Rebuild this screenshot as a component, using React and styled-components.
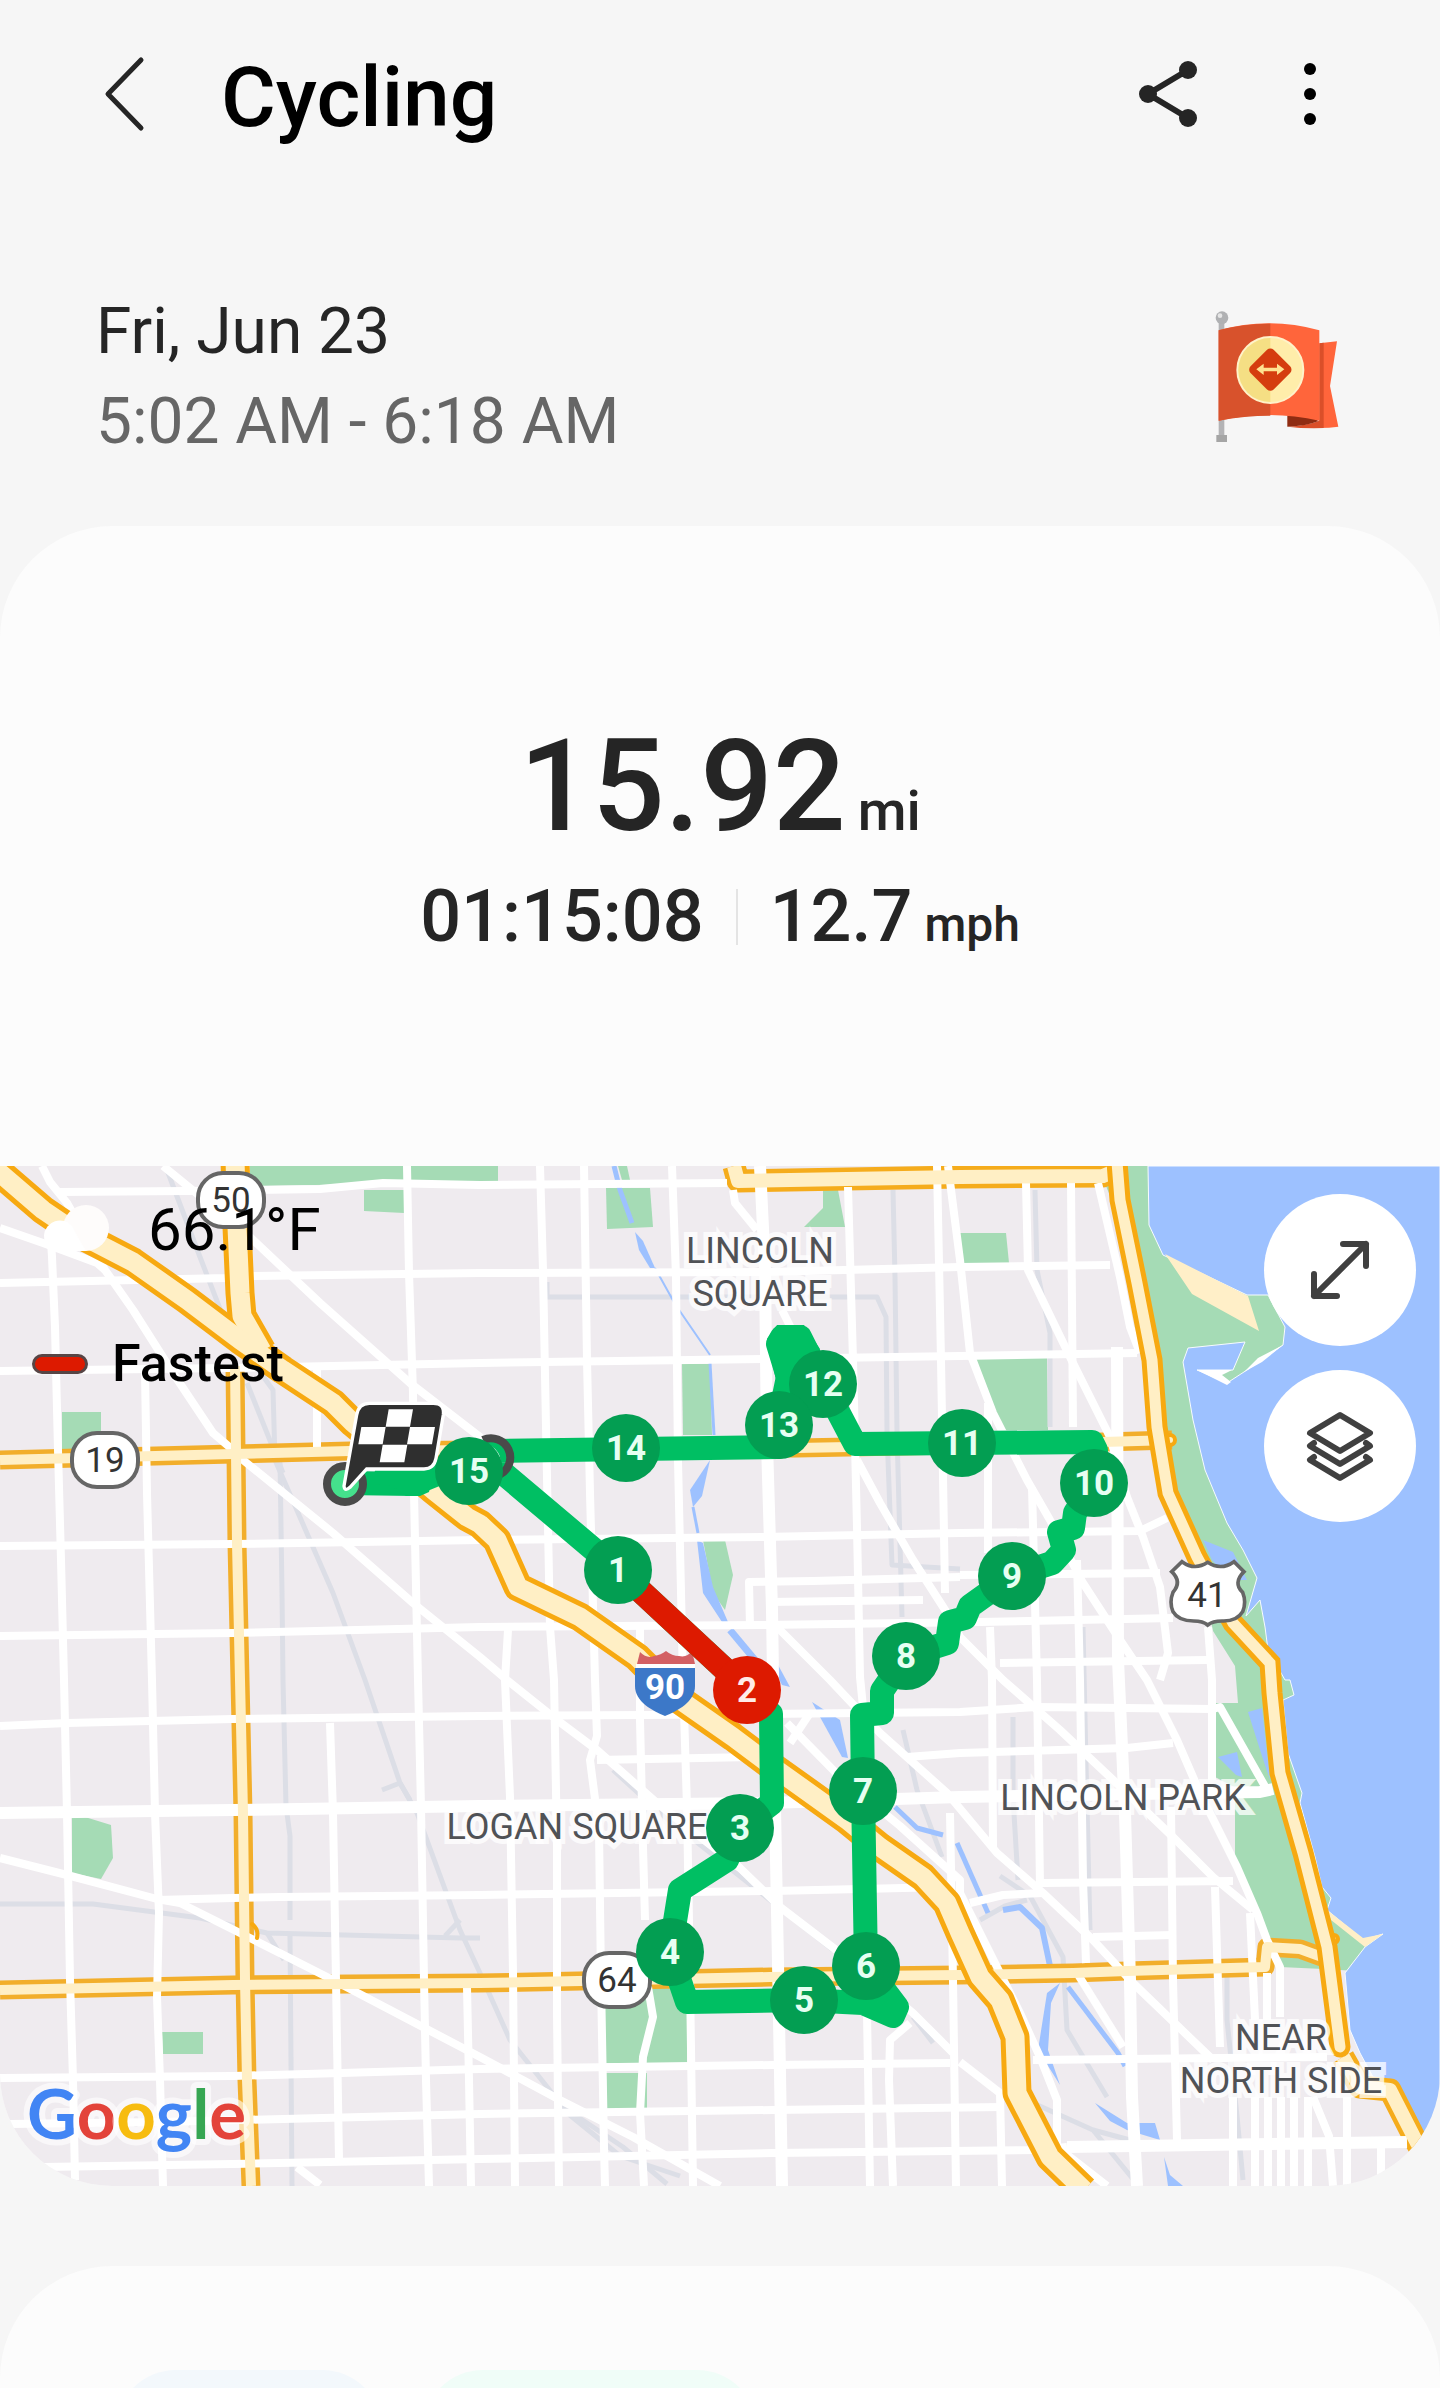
import styled, { createGlobalStyle } from "styled-components";

const GlobalStyle = createGlobalStyle`
    * {
        box-sizing: border-box;
    }

    body {
        margin: 0;
        background: #f6f6f6;
        font-family: Roboto, "Noto Sans", sans-serif;
        color: #252525;
    }

    h1, p {
        margin: 0;
    }
`;

const parks = [
    "250,0 498,0 498,16 250,20",
    "364,24 404,24 404,47 364,45",
    "62,246 101,246 101,284 62,284",
    "72,651 85,651 111,659 113,692 101,713 72,707",
    "162,866 203,866 203,888 163,888",
    "606,22 650,22 653,61 607,63",
    "618,0 627,0 630,14 622,14",
    "823,24 838,24 845,61 804,61 823,42",
    "682,198 710,198 712,269 683,269",
    "703,374 725,374 733,409 725,444 713,427",
    "960,67 1006,67 1009,97 962,97",
    "975,192 1047,192 1048,264 1000,264 987,227",
    "604,821 687,821 687,897 604,897",
    "606,907 647,907 647,943 607,943",
    "1105,18 1120,0 1300,0 1300,514 1310,640 1390,740 1390,807 1323,803 1280,801 1267,771 1255,741 1235,697 1235,631 1240,624 1215,611 1215,537 1238,537 1235,500 1213,465 1200,400 1170,330 1160,280 1145,110",
];

const lake =
    "1148,0 1149,59 1163,89 1247,129 1268,129 1285,161 1283,179 1247,204 1227,217 1197,204 1233,204 1245,176 1188,182 1183,196 1193,254 1205,304 1227,357 1243,384 1257,412 1246,450 1260,434 1265,461 1268,484 1285,514 1290,514 1294,529 1283,534 1288,587 1302,627 1300,637 1315,691 1322,721 1331,732 1327,744 1363,774 1383,768 1365,781 1345,807 1350,864 1360,887 1373,911 1393,914 1407,934 1427,981 1440,1007 1440,0";

const ponds = [
    "1203,374 1233,386 1247,414 1230,414 1212,394",
    "1248,546 1262,542 1270,614 1262,590",
    "1218,591 1237,586 1242,611 1236,609",
    "635,66 643,75 655,102 650,102 639,84",
    "710,294 690,324 693,341 702,330",
    "697,374 703,377 713,421 728,456 722,456 703,427",
    "812,536 840,554 848,592 842,591 820,551",
    "777,497 790,521 782,519 776,507",
    "1060,817 1047,827 1038,884 1060,919 1048,884 1051,837",
    "1095,937 1127,957 1155,957 1160,974 1127,964 1110,955",
    "1164,991 1170,1009 1183,1020 1168,1020",
];

const streams = [
    [5, "614,0 620,24 632,57"],
    [2, "655,102 675,138 710,189"],
    [3, "710,197 714,269"],
    [3, "693,341 698,367"],
    [7, "730,464 755,494"],
    [5, "895,641 917,662 943,669"],
    [5, "957,677 988,747"],
    [6, "1003,744 1020,741 1042,762 1050,800"],
    [5, "1068,821 1118,887 1125,900"],
];

const rails = [
    "280,294 282,427 283,514 286,640 290,670 290,754",
    "290,770 292,1020",
    "167,4 200,91 227,161 273,224 275,294 333,427 365,514 400,617 417,647 460,764 480,807 510,874 563,941 623,981 667,1018",
    "247,217 283,307",
    "382,624 400,617 410,634",
    "0,738 93,738 200,752 267,767 460,772 480,772",
    "445,770 460,754",
    "267,767 284,794",
    "500,400 545,431",
    "893,24 895,111 897,267 902,451",
    "547,116 547,131 877,131 886,151 887,267 892,399 960,403",
    "1035,24 1037,104 1050,167 1050,261",
    "1083,461 1086,597 1090,764",
    "1013,551 1013,631 1018,714",
    "1000,710 1030,730 1063,791 1067,864 1107,931",
    "980,754 1005,740 1027,734",
    "1033,937 1093,964 1137,1018",
    "1093,964 1130,974",
    "1227,811 1227,854 1237,950 1243,1014",
    "613,604 660,647 833,784",
    "903,564 917,624 942,691",
    "913,851 933,877",
    "560,941 620,990 680,1010",
];

const streets = [
    "42,0 50,16 67,37 105,104 133,144 173,207 213,267 233,284 243,294 333,367 413,437 480,491 507,514 557,554 597,584 657,637 740,702 780,741 840,787 913,847 953,887",
    "50,60 52,91 55,161 58,284 61,394 64,514 67,647 70,814 73,914 75,1014",
    "145,207 147,327 152,514 155,647 159,747 157,831 160,914 163,1020",
    "317,204 317,281",
    "330,557 333,647 336,814 339,994",
    "407,0 409,107 413,227 414,327 418,514 421,641 424,814 426,914 429,1020",
    "467,821 469,914 471,1020",
    "60,26 187,25 320,23 383,17 480,19 727,17",
    "0,117 227,112 250,110 480,107 767,106 960,101 1110,99",
    "0,205 227,202 283,201 480,197 763,193 960,190 1137,187",
    "0,380 233,378 480,374 763,371 960,367 1140,365 1167,352",
    "0,470 233,467 480,461 763,459 980,456 1173,452",
    "0,560 67,557 233,553 480,550 647,549 960,546 1037,541 1213,543",
    "157,734 233,732 280,731 480,729 773,725 947,721",
    "1043,717 1233,715",
    "970,737 1003,729 1043,727",
    "0,912 233,910 480,903 773,899 950,897",
    "1033,894 1220,892 1327,891",
    "10,958 160,956 480,948 773,944 1003,941",
    "43,1001 233,998 480,993 773,987 1037,984 1067,981",
    "163,0 250,71 320,137 410,217 480,271 500,290",
    "0,62 43,77 97,97 105,104",
    "0,692 67,709 157,733 180,737 250,772 333,814 480,891 560,934 633,971 720,1020",
    "297,1001 320,1019",
    "508,464 505,514 510,631 513,807 515,1020",
    "540,0 543,104 546,261 550,461 554,514 557,681 557,847 559,1020",
    "584,0 587,194 590,327 595,514 597,570 590,594 599,664 601,814 604,981 605,1020",
    "672,0 676,111 678,294 683,514 687,641 690,814 693,1020",
    "640,461 640,554 643,681 645,754",
    "648,821 653,851 643,891 640,947 644,1020",
    "848,21 853,194 857,361 860,511 863,541 867,847 870,1020",
    "937,0 941,194 945,427",
    "950,647 953,814 956,1020",
    "948,0 960,94 970,187 993,247 1027,314 1050,354 1083,417 1120,474 1147,514 1177,574 1200,627 1237,701 1257,747 1267,774 1280,801 1280,851",
    "782,144 794,168",
    "857,294 880,337 913,394 947,447 960,471 1003,514 1060,564 1127,627 1173,671 1213,711 1253,744",
    "733,24 735,37 757,64",
    "750,461 749,416 813,415 960,411",
    "767,436 923,434",
    "777,461 830,514 880,567 947,627 997,687 1043,727 1093,774 1133,817 1213,894",
    "787,557 840,611 900,660 960,714 960,727 997,801 1020,847 1040,891 1057,934 1057,981 1107,1020",
    "790,577 810,547",
    "597,594 753,591",
    "907,591 960,587 1127,582 1173,577",
    "910,857 890,874 889,914 893,1020",
    "1026,17 1028,104 1070,191 1110,271 1127,331 1143,371 1160,421 1168,487 1160,514",
    "1071,17 1073,261",
    "1098,17 1120,111 1130,161 1140,187",
    "988,237 988,387",
    "990,461 992,514 993,681",
    "1032,321 1037,514 1040,721",
    "1077,394 1080,514 1083,714 1086,797",
    "1208,461 1212,514 1212,614",
    "1171,641 1173,814 1177,974",
    "1215,721 1220,881",
    "1250,747 1255,854",
    "1267,807 1267,854",
    "960,409 1160,407",
    "1000,497 1207,494",
    "1093,771 1173,769",
    "1213,543 1220,541 1267,624",
    "1077,807 1123,881",
    "960,896 1000,927 1002,1020",
    "1233,931 1233,1020",
    "1255,931 1255,1020",
    "1268,931 1268,1020",
    "1281,931 1281,1020",
    "1294,931 1294,1020",
    "1308,931 1308,1020",
    "1313,931 1329,970 1333,1020",
    "1347,931 1347,1020",
    "1381,976 1381,1010",
];

const avenues = [
    "0,647 233,644 480,640 767,637 960,631 1260,626 1273,623",
    "760,0 765,104 767,277 772,444 775,641 778,797 782,1020",
    "1117,181 1118,494 1125,647 1130,814 1132,931 1137,1020",
    "1067,981 1407,976",
];

const highways = [
    "235,200 236,287 237,377 240,514 243,647 245,814 247,914 251,1020",
    "0,294 233,288 350,285 480,284 797,282 1103,276 1172,274",
    "0,824 233,819 480,817 770,811 960,809 1073,807 1127,805 1265,801 1267,781 1300,783 1322,791",
];

const wideHighways = [
    "734,0 738,15 960,11 1103,10 1117,4",
    "1343,891 1360,921 1390,924 1417,977 1440,1015",
];

const shoreDrive =
    "1117,-4 1120,34 1137,117 1152,194 1157,261 1168,327 1197,391 1233,457 1270,497 1272,527 1280,607 1303,687 1327,781 1340,881";

const expressways = [
    "235,-6 237,61 240,127 242,150 262,185",
    "-12,-4 0,7 43,44 77,67 133,96 187,134 240,174 283,204 333,237 353,257 433,324 467,351 480,358 497,374 518,421 580,451 637,491 680,534 733,571 773,601 847,654 880,681 923,711 947,737 960,767 980,811 1000,834 1015,871 1017,927 1050,991 1084,1024",
];

const route =
    "345,317 413,318 440,307 490,296 618,404 747,524 771,548 772,637 740,662 727,694 680,724 670,786 687,836 804,834 863,837 893,850 897,841 866,800 863,625 862,549 882,547 882,525 906,490 947,477 950,456 965,452 970,440 1012,410 1052,397 1064,384 1059,366 1073,362 1075,347 1094,317 1096,284 1092,276 855,278 823,217 800,171 782,171 778,178 788,211 778,259 778,281 495,285";

const laps = [
    [15, 469, 305],
    [1, 618, 404],
    [2, 747, 524, true],
    [3, 740, 662],
    [4, 670, 786],
    [5, 804, 834],
    [6, 866, 800],
    [7, 863, 625],
    [8, 906, 490],
    [9, 1012, 410],
    [10, 1094, 317],
    [11, 962, 277],
    [12, 823, 218],
    [13, 779, 259],
    [14, 626, 282],
];

const places = [
    ["LINCOLN", 760, 97],
    ["SQUARE", 760, 140],
    ["LOGAN SQUARE", 577, 673],
    ["LINCOLN PARK", 1123, 644],
    ["NEAR", 1281, 884],
    ["NORTH SIDE", 1281, 927],
];

const stateRoads = [
    [50, 231, 34],
    [19, 105, 294],
    [64, 617, 814],
];

const Lines = ({ items, color, width }) => (
    <g fill="none" stroke={color} strokeWidth={width} strokeLinejoin="round">
        {items.map((points) => (
            <polyline key={points} points={points} />
        ))}
    </g>
);

const BaseMap = () => (
    <>
        <rect width="1440" height="1020" fill="#efebef" />
        <g fill="#a5dbb5">
            {parks.map((points) => (
                <polygon key={points} points={points} />
            ))}
        </g>
        <Lines items={rails} color="#dcdee6" width={5} />
        <polygon points={lake} fill="#9dc1ff" stroke="#f7fbff" strokeWidth="1" />
        <g fill="#9dc1ff">
            {ponds.map((points) => (
                <polygon key={points} points={points} />
            ))}
        </g>
        {streams.map(([width, points]) => (
            <Lines key={points} items={[points]} color="#9dc1ff" width={width} />
        ))}
        <path
            fill="#ffffff"
            d="M1197 204h35l-10 5 9 7-4 3zM1283 179l-25 13-14 14 18-10z"
        />
        <path
            fill="#ffefc8"
            d="M1165 88l83 42 11 35-67-37zM1327 744l36 28 20-4-18 13-34-27z"
        />
        <Lines items={highways} color="#f2ae2b" width={19} />
        <Lines items={wideHighways} color="#f5ac1c" width={23} />
        <Lines items={streets} color="#ffffff" width={8} />
        <Lines items={avenues} color="#ffffff" width={12} />
        <Lines items={highways} color="#ffefc5" width={10} />
        <Lines items={wideHighways} color="#ffefc5" width={14} />
        <g fill="none" stroke="#f7a911" strokeLinecap="round">
            <circle cx="1170" cy="274" r="5" strokeWidth="4" fill="#ffefc5" />
            <circle cx="1334" cy="773" r="4" strokeWidth="4" fill="#ffefc5" />
            <path d="M252 758q7 5 5 14" strokeWidth="4" />
            <polyline points={shoreDrive} strokeWidth="21" />
            <polyline points={shoreDrive} stroke="#ffefc5" strokeWidth="11" />
        </g>
        <Lines items={expressways} color="#f7a911" width={29} />
        <Lines items={expressways} color="#ffefc5" width={19} />
    </>
);

const FinishFlag = () => (
    <g transform="translate(0 -6) scale(.33333)">
        <path
            d="M1108 730H1300q34 0 30 34L1308 895q-6 32-36 32H1100L1050 982q-16 14-18-4L1070 765q6-35 38-35z"
            fill="#2f2f2f"
            stroke="#fff"
            strokeWidth="10"
        />
        <path
            fill="#fff"
            d="M1166 748h73l-9 52h-73zM1084 801h73l-9 52h-73zM1230 801h75l-9 52h-75zM1148 854h74l-9 53h-74z"
        />
    </g>
);

const RouteMap = () => (
    <MapDrawing viewBox="0 0 1440 1020" role="img" aria-label="Route map">
        <BaseMap />
        {places.map(([name, x, y]) => (
            <PlaceName key={name} x={x} y={y}>
                {name}
            </PlaceName>
        ))}
        {stateRoads.map(([number, x, y]) => (
            <g key={number}>
                <rect
                    x={x - 33}
                    y={y - 27}
                    width="66"
                    height="54"
                    rx="25"
                    fill="#fff"
                    stroke="#666"
                    strokeWidth="4"
                />
                <RoadNumber x={x} y={y + 12}>
                    {number}
                </RoadNumber>
            </g>
        ))}
        <path
            d="M635 502h60v18c0 16-18 25-30 30-12-5-30-14-30-30z"
            fill="#3c78c8"
        />
        <path
            d="M640 486q7 7 14 4 7-1 12-5 6 5 13 5 8 2 13-5l3 13h-58z"
            fill="#d36064"
        />
        <path d="M636 500h59" stroke="#fff" strokeWidth="4" />
        <LapNumber x="665" y="533" fill="#fff">
            90
        </LapNumber>
        <path
            transform="translate(960 -6) scale(.33333)"
            d="M666 1205q38 28 77 2 40 26 79-2l30 30q-34 34-4 62 12 30 0 58-18 30-62 28-28 0-43 12-14-12-42-12-46 0-62-28-12-28 0-58 28-32-4-62z"
            fill="#fff"
            stroke="#666"
            strokeWidth="11"
        />
        <RoadNumber x="1207" y="441">
            41
        </RoadNumber>

        <g fill="none" strokeLinejoin="round">
            <polyline points={route} stroke="#00bf63" strokeWidth="24" strokeLinecap="round" />
            <path d="M376 300l60-4-7 30-9 4h-14l-14-10-20-2z" fill="#00bf63" />
            <path d="M767 173l10-14h27l16 24-14 50-28-10z" fill="#00bf63" />
            <path d="M483 274a19 19 0 0 1 16 35" stroke="#4a4a4a" strokeWidth="8" />
            <path d="M484 282a13 13 0 0 1 12 19" stroke="#fff" strokeWidth="6" />
            <path d="M618 404L747 524" stroke="#dd1a00" strokeWidth="24" />
        </g>
        {laps.map(([lap, x, y, fastest]) => (
            <g key={lap}>
                <circle cx={x} cy={y} r="34" fill={fastest ? "#dd1a00" : "#039e52"} />
                <LapNumber x={x} y={y + 12} fill={fastest ? "#ffece8" : "#e6fff2"}>
                    {lap}
                </LapNumber>
            </g>
        ))}
        <circle cx="345" cy="318" r="18" fill="#45e08c" stroke="#4a4a4a" strokeWidth="8" />
        <FinishFlag />

        <Brand x="27" y="973">
            <tspan fill="#4285f4">G</tspan>
            <tspan fill="#e3433a">o</tspan>
            <tspan fill="#f7bc10">o</tspan>
            <tspan fill="#4285f4">g</tspan>
            <tspan fill="#37a653">l</tspan>
            <tspan fill="#e3433a">e</tspan>
        </Brand>
    </MapDrawing>
);

const RewardFlag = () => (
    <svg width="124" height="134" viewBox="105 84 372 402" aria-hidden="true">
        <path d="M116 120h17v345h-17z" fill="#b3b3b5" />
        <path d="M109 459h32v21h-32z" fill="#a5a5a5" />
        <circle cx="126" cy="107" r="19" fill="#b0b1b3" />
        <circle cx="120" cy="101" r="7" fill="#e6e6e6" />
        <path d="M418 184l53-6-21 134 25 122q-27 4-57 4z" fill="#ff653b" />
        <path d="M418 184l13-2v256q-60 2-108-4 60-4 95-18z" fill="#da4f29" />
        <path d="M322 400h60l34 17q-36 15-94 17z" fill="#8f2c12" />
        <path d="M116 145q150-42 302 0v271q-152-34-302 0z" fill="#ff653b" />
        <path d="M116 145q75-21 155-20v276q-78 0-155 15z" fill="#d8522c" />
        <circle cx="271" cy="264" r="99" fill="#ffedaa" stroke="#fff2c9" strokeWidth="6" />
        <path d="M271 168a96 96 0 0 0 0 192z" fill="#f5df84" />
        <rect
            x="222"
            y="214"
            width="98"
            height="98"
            rx="14"
            transform="rotate(45 271 263)"
            fill="#d53d0f"
        />
        <path
            d="M229 262l22-17v12h40v-12l22 17-22 17v-11h-40v11z"
            fill="#ffe291"
        />
    </svg>
);

const App = () => (
    <Page>
        <GlobalStyle />
        <Header>
            <IconButton aria-label="Back">
                <svg width="60" height="80" viewBox="0 0 60 80" fill="none">
                    <path
                        d="M45 6L12 40l33 34"
                        stroke="#252525"
                        strokeWidth="5"
                        strokeLinecap="round"
                        strokeLinejoin="round"
                    />
                </svg>
            </IconButton>
            <Title>Cycling</Title>
            <Actions>
                <IconButton aria-label="Share">
                    <svg width="60" height="68" viewBox="0 0 60 68">
                        <path d="M50 10L10 34l40 24" fill="none" stroke="#252525" strokeWidth="6" />
                        <circle cx="50" cy="10" r="9" fill="#252525" />
                        <circle cx="10" cy="34" r="9" fill="#252525" />
                        <circle cx="50" cy="58" r="9" fill="#252525" />
                    </svg>
                </IconButton>
                <IconButton aria-label="More options">
                    <svg width="40" height="68" viewBox="0 0 40 68">
                        <circle cx="20" cy="9" r="6" />
                        <circle cx="20" cy="34" r="6" />
                        <circle cx="20" cy="59" r="6" />
                    </svg>
                </IconButton>
            </Actions>
        </Header>

        <Session>
            <div>
                <SessionLine>Fri, Jun 23</SessionLine>
                <SessionLine $muted>5:02 AM - 6:18 AM</SessionLine>
            </div>
            <RewardFlag />
        </Session>

        <SummaryCard>
            <Summary>
                <Distance>
                    15.92<Unit $size={56}>mi</Unit>
                </Distance>
                <Details>
                    <p>01:15:08</p>
                    <Divider />
                    <p>
                        12.7<Unit $size={48}>mph</Unit>
                    </p>
                </Details>
            </Summary>
            <MapPanel>
                <RouteMap />
                <MapInfo>
                    <Weather>
                        <Cloud viewBox="0 0 72 52" aria-label="Cloudy">
                            <circle cx="46" cy="24" r="23" fill="#fefcfb" />
                            <path d="M4 31a16 16 0 0 1 28-9q6 12 14 25H20Q4 47 4 31z" fill="#fff" />
                        </Cloud>
                        <span>66.1°F</span>
                    </Weather>
                    <Legend>
                        <Swatch />
                        <span>Fastest</span>
                    </Legend>
                </MapInfo>
                <MapControls>
                    <MapButton aria-label="Expand map">
                        <svg width="64" height="64" viewBox="0 0 64 64">
                            <path d="M35 6h23v22M6 36v22h23M58 6L6 58" />
                        </svg>
                    </MapButton>
                    <MapButton aria-label="Map layers">
                        <svg width="72" height="72" viewBox="0 0 72 72">
                            <path d="M36 5l30 18-30 18L6 23zM10 33l-4 3 30 18 30-18-4-3M10 47l-4 3 30 18 30-18-4-3" />
                        </svg>
                    </MapButton>
                </MapControls>
            </MapPanel>
        </SummaryCard>

        <ChartCard>
            <Chip $color="#f3f8fc" $width={266} />
            <Chip $color="#f0fdf8" $width={334} />
        </ChartCard>
    </Page>
);

export default App;

const Page = styled.main`
    overflow: hidden;
`;

const Header = styled.header`
    display: flex;
    align-items: center;
    height: 188px;
    padding: 0 110px 0 96px;
    gap: 65px;
`;

const Title = styled.h1`
    flex: 1;
    padding-top: 8px;
    font-size: 84px;
    font-weight: 500;
    line-height: 96px;
    color: #000;
`;

const Actions = styled.div`
    display: flex;
    align-items: center;
    gap: 92px;
`;

const IconButton = styled.button`
    display: flex;
    padding: 0;
    border: none;
    background: none;
    cursor: pointer;
`;

const Session = styled.section`
    display: flex;
    align-items: center;
    justify-content: space-between;
    padding: 99px 101px 59px 96px;
`;

const SessionLine = styled.p`
    font-size: 64px;
    line-height: 90px;
    color: ${({ $muted }) => ($muted ? "#666" : "#252525")};
`;

const SummaryCard = styled.section`
    overflow: hidden;
    border-radius: 112px;
    background: #fcfcfc;
`;

const Summary = styled.div`
    display: flex;
    flex-direction: column;
    align-items: center;
    gap: 14px;
    padding: 185px 0 207px;
    font-weight: 500;
`;

const Distance = styled.p`
    font-size: 128px;
    line-height: 150px;
`;

const Details = styled.div`
    display: flex;
    align-items: center;
    gap: 32px;
    font-size: 72px;
    line-height: 84px;
`;

const Unit = styled.span`
    margin-left: 12px;
    font-size: ${({ $size }) => $size}px;
    line-height: 1;
`;

const Divider = styled.span`
    width: 2px;
    height: 56px;
    background: #e4e4e4;
`;

const MapPanel = styled.div`
    position: relative;
`;

const MapDrawing = styled.svg`
    display: block;
    width: 100%;
    height: auto;
`;

const PlaceName = styled.text`
    font-size: 36px;
    text-anchor: middle;
    fill: #505256;
    stroke: rgba(255, 255, 255, 0.75);
    stroke-width: 10px;
    paint-order: stroke;
`;

const RoadNumber = styled.text`
    font-size: 35px;
    text-anchor: middle;
    fill: #333;
`;

const LapNumber = styled.text`
    font-size: 35px;
    font-weight: 700;
    text-anchor: middle;
`;

const Brand = styled.text`
    font-family: Lato, sans-serif;
    font-size: 69px;
    font-weight: 700;
    stroke: rgba(255, 255, 255, 0.6);
    stroke-width: 12px;
    stroke-linejoin: round;
    paint-order: stroke;
`;

const MapInfo = styled.div`
    position: absolute;
    top: 24px;
    left: 32px;
    color: #000;
`;

const Weather = styled.div`
    display: flex;
    align-items: center;
    gap: 36px;
    padding-left: 8px;
    font-size: 60px;
    line-height: 80px;
`;

const Cloud = styled.svg`
    width: 72px;
    height: 52px;
`;

const Legend = styled.div`
    display: flex;
    align-items: center;
    gap: 24px;
    margin-top: 64px;
    font-size: 52px;
    font-weight: 500;
    line-height: 60px;
`;

const Swatch = styled.span`
    width: 56px;
    height: 20px;
    border: 3px solid #574545;
    border-radius: 10px;
    background: #dd1a00;
`;

const MapControls = styled.div`
    position: absolute;
    top: 28px;
    right: 24px;
    display: grid;
    gap: 24px;
`;

const MapButton = styled.button`
    display: flex;
    align-items: center;
    justify-content: center;
    width: 152px;
    height: 152px;
    padding: 0;
    border: none;
    border-radius: 50%;
    background: #fff;
    cursor: pointer;

    path {
        fill: none;
        stroke: #404040;
        stroke-width: 6px;
        stroke-linecap: round;
        stroke-linejoin: round;
    }
`;

const ChartCard = styled.section`
    display: flex;
    gap: 41px;
    height: 122px;
    margin-top: 80px;
    padding: 104px 116px 0;
    overflow: hidden;
    border-radius: 112px 112px 0 0;
    background: #fcfcfc;
`;

const Chip = styled.div`
    flex: none;
    width: ${({ $width }) => $width}px;
    height: 120px;
    border-radius: 60px;
    background: ${({ $color }) => $color};
`;
